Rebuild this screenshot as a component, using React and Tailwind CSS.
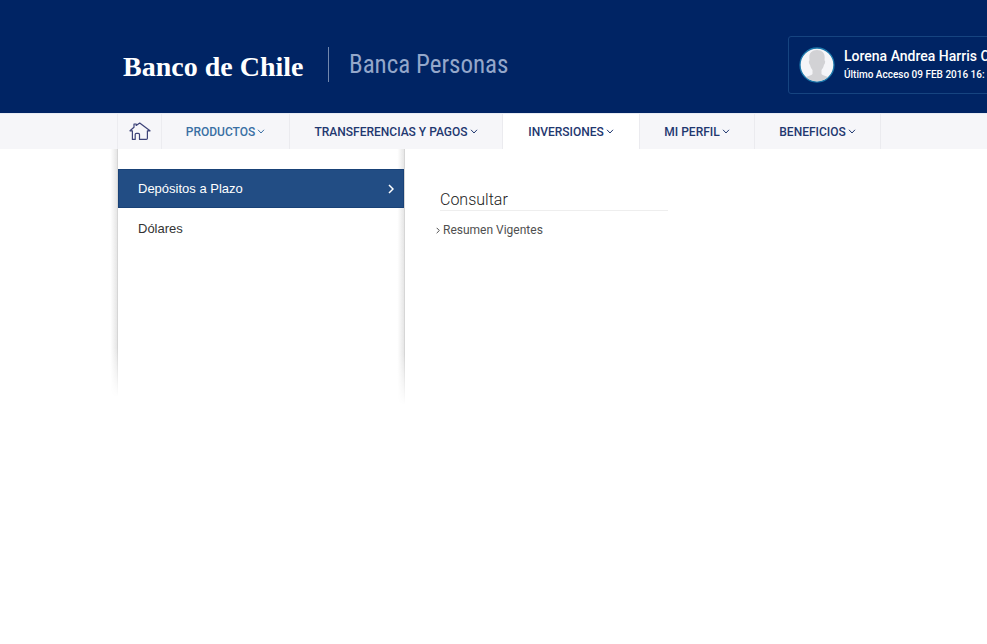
import React from "react";

function Chevron({ className = "", direction = "down" }) {
  return direction === "down" ? (
    <svg className={`h-[5px] w-[8px] shrink-0 ${className}`} viewBox="0 0 8 5" fill="none" stroke="currentColor" strokeWidth="1" aria-hidden="true">
      <path d="M1 0.8 L4 4 L7 0.8" />
    </svg>
  ) : (
    <svg className={`shrink-0 ${className}`} viewBox="0 0 6 10" fill="none" stroke="currentColor" strokeWidth="1.5" aria-hidden="true">
      <path d="M1 1 L5 5 L1 9" />
    </svg>
  );
}

function HomeIcon() {
  return (
    <svg className="h-[20px] w-[22px]" viewBox="0 0 22 20" fill="none" stroke="#3d4378" strokeWidth="1.2" strokeLinejoin="round" strokeLinecap="round" aria-hidden="true">
      <path d="M1 8.8 L5 5.3 V2 H7.2 V3.4 L10.7 1 L21 8.8 H18.4 V16.2 Q18.4 17.4 17.2 17.4 H10.5 V12.6 Q10.5 11.4 9.3 11.4 H7.4 Q6.2 11.4 6.2 12.6 V17.4 H3.4 V8.8 Z" />
    </svg>
  );
}

function Avatar() {
  return (
    <svg className="h-[36px] w-[36px] shrink-0" viewBox="0 0 36 36" role="img" aria-label="Foto de perfil">
      <defs>
        <clipPath id="avatar-circle">
          <circle cx="18" cy="18" r="16.4" />
        </clipPath>
      </defs>
      <circle cx="18" cy="18" r="17" fill="#f5f5f8" stroke="#1b77ab" strokeWidth="1.3" />
      <g clipPath="url(#avatar-circle)" fill="#d2d2d5">
        <path d="M18 3 C23 3 25.8 6 25.7 10.5 L25.5 13.5 C26.6 13.5 26.2 17 25 17.8 C24.5 20.5 23.4 22 22.5 23 V27 C24 29 30 29.5 32 32 V36 H4 V32 C6 29.5 12 29 13.5 27 V23 C12.6 22 11.5 20.5 11 17.8 C9.8 17 9.4 13.5 10.5 13.5 L10.3 10.5 C10.2 6 13 3 18 3 Z" />
      </g>
    </svg>
  );
}

const tabs = [
  { label: "PRODUCTOS", width: "w-[128px]", look: "text-[#3a70a4]" },
  { label: "TRANSFERENCIAS Y PAGOS", width: "w-[213px]", look: "text-[#1f3870]" },
  { label: "INVERSIONES", width: "w-[137px]", look: "bg-white text-[#1f3870]" },
  { label: "MI PERFIL", width: "w-[115px]", look: "text-[#1f3870]" },
  { label: "BENEFICIOS", width: "w-[126px]", look: "text-[#1f3870]" },
];

function EdgeShadow() {
  return (
    <div className="w-[12px] shrink-0 border-r border-[#d6d6d6] bg-linear-to-l from-[#e6e6e6] to-white to-60% [mask-image:linear-gradient(to_bottom,black_80%,transparent)]" />
  );
}

export default function App() {
  return (
    <div className="min-h-screen overflow-hidden bg-white font-['Roboto','Liberation_Sans',sans-serif]">
      <header className="flex h-[113px] items-center bg-[#002464] pt-4 pl-[123px]">
        <div className="w-[205px] shrink-0 pt-1 font-['Liberation_Serif',serif] text-[28px] leading-8 font-bold whitespace-nowrap text-white">
          Banco de Chile
        </div>
        <div className="w-[460px] shrink-0 border-l border-[#7187ad] pl-5 font-['Roboto_Condensed','Roboto',sans-serif] text-[25px] leading-[35px] whitespace-nowrap text-[#94a7ca]">
          Banca Personas
        </div>
        <div className="flex h-[58px] w-[300px] shrink-0 items-center gap-[9px] rounded-[3px] border border-[#164480] pl-[10px] whitespace-nowrap text-white">
          <Avatar />
          <div>
            <div className="text-[14px] leading-5 font-medium">Lorena Andrea Harris C</div>
            <div className="text-[10px] leading-[18px] font-medium">Último Acceso 09 FEB 2016 16:</div>
          </div>
        </div>
      </header>

      <nav className="flex h-[36px] border-t border-[#e7ebf3] bg-[#f6f6f9] pl-[117px]">
        <a href="#inicio" aria-label="Inicio" className="flex w-[45px] shrink-0 items-center justify-center border-x border-[#ececf0]">
          <HomeIcon />
        </a>
        {tabs.map((tab) => (
          <button key={tab.label} type="button" className={`flex shrink-0 items-center justify-center gap-[2px] border-r border-[#ebebef] text-[12px] font-medium whitespace-nowrap ${tab.width} ${tab.look}`}>
            {tab.label}
            <Chevron />
          </button>
        ))}
      </nav>

      <main className="flex pl-[106px]">
        <div className="flex h-[248px]">
          <EdgeShadow />
        </div>
        <div className="relative flex w-[287px] shrink-0 justify-end">
          <ul className="absolute inset-x-0 top-0 z-10 mr-px pt-5 font-['Liberation_Sans',sans-serif] text-[13px]">
            <li>
              <a href="#depositos" className="flex h-[39px] items-center justify-between border border-[#194277] bg-[#224d84] pr-[9px] pl-[19px] text-white">
                Depósitos a Plazo
                <Chevron direction="right" className="h-[10px] w-[6px]" />
              </a>
            </li>
            <li>
              <a href="#dolares" className="flex h-[41px] items-center pl-5 text-[#333333]">
                Dólares
              </a>
            </li>
          </ul>
          <div className="flex h-[256px]">
            <EdgeShadow />
          </div>
        </div>
        <section className="ml-[31px] w-[232px] pt-10">
          <h2 className="ml-[4px] border-b border-[#eeeeee] text-[16px] leading-[21px] font-light text-[#222222]">Consultar</h2>
          <a href="#resumen" className="mt-[10px] flex items-center gap-[3px] text-[12px] leading-[18px] text-[#505050]">
            <Chevron direction="right" className="h-[7px] w-[4px]" />
            Resumen Vigentes
          </a>
        </section>
      </main>
    </div>
  );
}
